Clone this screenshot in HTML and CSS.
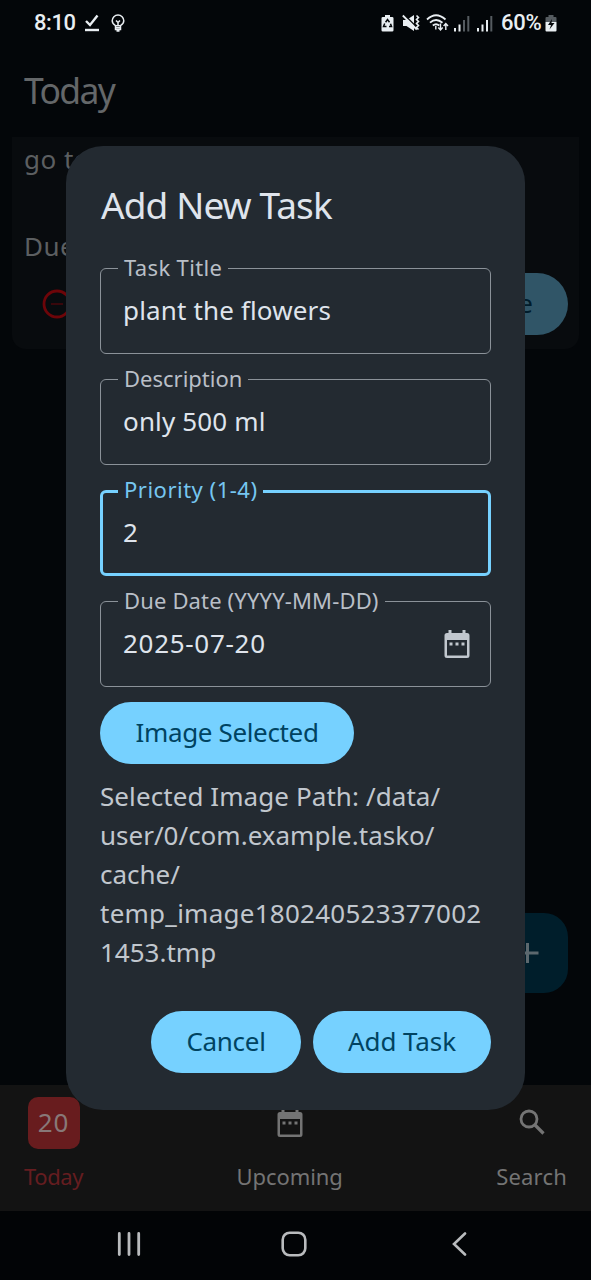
FILE: index.html
```html
<!DOCTYPE html>
<html lang="en">
<head>
<meta charset="utf-8">
<title>Tasko</title>
<link rel="stylesheet" href="styles.css">
</head>
<body>
<div class="screen">
  <header class="status">
    <div class="status-left">
      <span class="clock">8:10</span>
      <svg class="ico-done" width="16" height="18" viewBox="0 0 16 18"><path d="M2 7l4 4L13.500 1.500" fill="none" stroke="#e9eef2" stroke-width="2.400"/><path d="M1 16h14" stroke="#e9eef2" stroke-width="2.400"/></svg>
      <svg class="ico-bulb" width="14" height="18" viewBox="0 0 14 18" fill="none" stroke="#e9eef2" stroke-width="1.500"><path d="M4.500 11.700C2.500 10.500 1.200 9 1.200 6.800a5.600 5.600 0 0 1 11.600 0c0 2.200-1.300 3.700-3.300 4.900z"/><path d="M4.500 12v3.500h5V12M5.500 17h3M4.500 13.700h5M7 11V8.500L5 6.500M7 8.500l2-2"/></svg>
    </div>
    <div class="status-right">
      <svg width="13" height="18" viewBox="0 0 13 18"><path d="M4 1h5v2h2.200q1.300 0 1.300 1.300v12q0 1.200-1.300 1.200H1.800Q.5 17.500.5 16.300v-12Q.5 3 1.800 3H4z" fill="#e9eef2"/><path d="M4.600 8.200L6.500 5.500l2 2.700M9.500 9.800l1 2.700H8M5.500 12.500h-3l1.200-3" fill="none" stroke="#05080b" stroke-width="1.500"/></svg>
      <svg class="ico-mute" width="18" height="18" viewBox="0 0 18 18"><path d="M1 6h3.500L12 1v16l-7.500-5H1z" fill="#e9eef2"/><path d="M2 .5L15 13.500" stroke="#05080b" stroke-width="1.500"/><path d="M.800 1.500l14 14" stroke="#e9eef2" stroke-width="1.800"/><path d="M14.500 1.500l2 2-2 2 2 2-2 2 2 2-2 2 2 2" fill="none" stroke="#e9eef2" stroke-width="1.600"/></svg>
      <svg class="ico-wifi" width="23" height="19" viewBox="0 0 23 19" fill="none" stroke="#e9eef2" stroke-width="1.800"><path d="M1 6.500Q10 -2 19.500 6.500M4 9.700q6-5.500 12.500 0M6.800 12.500q3.200-2.600 6.500 0"/><path d="M9.800 13v3.500M14.500 10.500v6.500m-2.200-2.500l2.200 2.500 2.200-2.500M19.800 17v-6.500m-2.200 2.500l2.200-2.500 2.200 2.500" stroke-width="1.400"/></svg>
      <svg class="ico-sig" width="17" height="18" viewBox="0 0 17 18"><path d="M2 14v3.500M6.500 10.500v7" stroke="#e9eef2" stroke-width="2"/><path d="M11 6v11.500M15.300 2v15.500" stroke="#555b60" stroke-width="2"/></svg>
      <svg class="ico-sig2" width="17" height="18" viewBox="0 0 17 18"><path d="M2 14v3.500M6.500 10.500v7M11 6v11.500" stroke="#e9eef2" stroke-width="2"/><path d="M15.300 2v15.500" stroke="#555b60" stroke-width="2"/></svg>
      <span class="percent">60%</span>
      <svg class="ico-bat" width="12" height="18" viewBox="0 0 12 18"><path d="M3.500 1h5v2h2q1 0 1 1v4H.5V4q0-1 1-1h2z" fill="#555b60"/><path d="M.5 8h11v8.500q0 1-1 1h-9q-1 0-1-1z" fill="#e9eef2"/><path d="M7 5l-4 6h3l-1.500 4.500L9.500 9h-3z" fill="#05080b"/></svg>
    </div>
  </header>

  <main class="page">
    <h1 class="page-title">Today</h1>
    <section class="card">
      <p class="card-text">go to</p>
      <p class="card-text card-due">Due:</p>
      <div class="card-foot">
        <svg width="30" height="30" viewBox="0 0 30 30" fill="none" stroke="#6d0509" stroke-width="2.800"><circle cx="15" cy="15" r="13"/><path d="M9 15h12" stroke="#38070b" stroke-width="2"/></svg>
        <button class="pill dim">Delete</button>
      </div>
    </section>
    <button class="fab"><svg width="26" height="26" viewBox="0 0 26 26"><path d="M12.500 3v20M3 13h20.500" stroke="#5c686e" stroke-width="3"/></svg></button>
  </main>

  <nav class="tabs">
    <div class="tab tab-today"><span class="day">20</span><span class="tab-label l-today">Today</span></div>
    <div class="tab tab-up">
      <svg class="tab-icon" width="28" height="31" viewBox="0 0 28 31"><path d="M4 4h20q2.500 0 2.500 2.500v20q0 2.500-2.500 2.500H4q-2.500 0-2.500-2.500v-20Q1.500 4 4 4zM4 11v15.500h20V11z" fill="#747474" fill-rule="evenodd"/><path d="M7 1v4M21 1v4" stroke="#747474" stroke-width="3"/><path d="M6.500 15h3M12.500 15h3M18.500 15h3" stroke="#747474" stroke-width="3"/></svg>
      <span class="tab-label">Upcoming</span>
    </div>
    <div class="tab tab-search">
      <svg class="tab-icon" width="26" height="26" viewBox="0 0 26 26" fill="none" stroke="#747474" stroke-width="2.800"><circle cx="10" cy="10" r="8"/><path d="M15.500 15.500l9 9" stroke-width="3.200"/></svg>
      <span class="tab-label l-search">Search</span>
    </div>
  </nav>

  <footer class="sysnav">
    <svg width="24" height="24" viewBox="0 0 24 24" stroke="#b9bbbd" stroke-width="2.800" stroke-linecap="round"><path d="M2.300 1.500v21M12 1.500v21M21.700 1.500v21"/></svg>
    <svg class="home" width="26" height="26" viewBox="0 0 26 26" fill="none" stroke="#b9bbbd" stroke-width="2.600"><rect x="1.700" y="1.700" width="22.600" height="22.600" rx="7"/></svg>
    <svg width="15" height="24" viewBox="0 0 15 24" fill="none" stroke="#b9bbbd" stroke-width="2.600" stroke-linecap="round"><path d="M13 1.500L2 12l11 10.500"/></svg>
  </footer>

  <div class="dialog" role="dialog">
    <h2 class="dialog-title">Add New Task</h2>
    <div class="fields">
      <div class="field"><label class="f-title">Task Title</label><span class="value">plant the flowers</span></div>
      <div class="field"><label>Description</label><span class="value">only 500 ml</span></div>
      <div class="field focused"><label class="f-prio">Priority (1-4)</label><span class="value">2</span></div>
      <div class="field"><label class="f-date">Due Date (YYYY-MM-DD)</label><span class="value v-date">2025-07-20</span>
        <svg class="cal" width="28" height="31" viewBox="0 0 28 31"><path d="M4 4h20q2.500 0 2.500 2.500v20q0 2.500-2.500 2.500H4q-2.500 0-2.500-2.500v-20Q1.500 4 4 4zM4 11v15.500h20V11z" fill="#c1c7ce" fill-rule="evenodd"/><path d="M7 1v4M21 1v4" stroke="#c1c7ce" stroke-width="3"/><path d="M6.500 15h3M12.500 15h3M18.500 15h3" stroke="#c1c7ce" stroke-width="3"/></svg>
      </div>
    </div>
    <button class="pill image-btn">Image Selected</button>
    <p class="path"><span class="p1">Selected Image Path: /data/</span><br>user/0/com.example.tasko/<br>cache/<br><span class="p4">temp_image180240523377002</span><br>1453.tmp</p>
    <div class="actions">
      <button class="pill cancel">Cancel</button>
      <button class="pill add">Add Task</button>
    </div>
  </div>
</div>
</body>
</html>
```
FILE: styles.css
```css
* { box-sizing: border-box; margin: 0; padding: 0; }
body { background: #030609; font-family: "Noto Sans", "Open Sans", sans-serif; }
button { border: 0; font: inherit; }
svg { display: block; flex: none; }
.screen { position: relative; width: 591px; height: 1280px; display: flex; flex-direction: column; overflow: hidden; background: #030609; white-space: nowrap; }

.status { height: 45px; padding: 0 34px; display: flex; justify-content: space-between; align-items: center; color: #e9eef2; font: 500 22px/44px Roboto, sans-serif; }
.status-left, .status-right { display: flex; align-items: center; }
.clock { width: 42px; letter-spacing: -0.4px; }
.ico-done { margin-left: 8px; }
.ico-bulb { margin-left: 11px; }
.ico-mute { margin-left: 8px; }
.ico-wifi { margin-left: 6px; }
.ico-sig { margin-left: 4px; }
.ico-sig2 { margin-left: 6px; }
.percent { margin-left: 8px; width: 43px; letter-spacing: -0.3px; }
.ico-bat { margin-left: 1px; }

.page { flex: 1; display: flex; flex-direction: column; padding: 0 12px; }
.page-title { height: 92px; padding-left: 12px; font-size: 35.5px; line-height: 91px; font-weight: 400; color: #646769; letter-spacing: -1.7px; }
.card { height: 212px; padding: 1px 11px 14px 12px; border-radius: 0 0 14px 14px; background: #080b0e; display: flex; flex-direction: column; }
.card-text { height: 42px; line-height: 42px; font-size: 26px; letter-spacing: 0.5px; color: #5c5f61; }
.card-due { margin-top: 45px; }
.card-foot { flex: 1; display: flex; align-items: flex-end; justify-content: space-between; padding-left: 18px; }
.card-foot svg { margin-bottom: 16px; }
.pill { height: 62px; border-radius: 31px; background: #76d1ff; color: #004361; font-size: 26px; line-height: 60px; text-align: center; white-space: nowrap; padding-bottom: 2px; }
.dim { width: 146px; background: #305567; color: #001c2b; letter-spacing: -0.8px; }
.fab { align-self: flex-end; margin: 564px 11px 0 0; width: 80px; height: 80px; border-radius: 24px; background: #001e2b; display: flex; align-items: center; justify-content: center; }

.tabs { height: 126px; background: #131313; display: flex; justify-content: space-between; padding: 12px 24px 0; }
.tab { display: flex; flex-direction: column; align-items: center; color: #747474; }
.tab-label { font-size: 22px; line-height: 30px; margin-top: auto; margin-bottom: 20px; letter-spacing: -0.1px; }
.tab-today .tab-label { color: #651d20; letter-spacing: -0.4px; }
.tab .l-search { letter-spacing: 0.2px; }
.day { width: 52px; height: 52px; border-radius: 10px; background: #681c1e; color: #887878; font-size: 26px; line-height: 50px; text-align: center; letter-spacing: 1px; }
.tab-up .tab-icon { margin-top: 11px; }
.tab-search .tab-icon { margin-top: 12px; }

.sysnav { height: 69px; background: #020406; display: flex; align-items: center; justify-content: space-between; padding: 0 124px 3px 117px; }
.home { margin-right: 6px; }

.dialog { position: absolute; left: 66px; top: 146px; width: 459px; height: 964px; border-radius: 37px; background: #232a31; padding: 34px 34px 37px; display: flex; flex-direction: column; align-items: flex-start; color: #dfe4ec; }
.dialog-title { height: 50px; line-height: 50px; font-size: 37px; font-weight: 400; letter-spacing: -0.9px; padding-left: 1px; }
.fields { width: 391px; margin-top: 38px; display: flex; flex-direction: column; gap: 25px; }
.field { position: relative; height: 86px; border: 1.500px solid #8b9299; border-radius: 6px; display: flex; align-items: center; justify-content: space-between; padding: 0 19px 0 22px; }
.field label { position: absolute; left: 17px; top: -18px; padding: 0 6px; height: 32px; line-height: 32px; font-size: 22px; background: #232a31; color: #b9bfc7; }
.field .value { font-size: 26px; line-height: 40px; padding-bottom: 2px; letter-spacing: 0.150px; }
.field .v-date { letter-spacing: 0.700px; }
.field .f-title { letter-spacing: 0.350px; }
.field .f-date { letter-spacing: 0.150px; }
.focused { border: 3px solid #76d1ff; padding-left: 20px; }
.field.focused label { left: 15px; top: -20px; color: #76c6f0; letter-spacing: 0.500px; }
.cal { margin-right: 0.5px; }
.image-btn { width: 254px; margin-top: 15px; letter-spacing: -0.350px; }
.path { margin-top: 13px; font-size: 26px; line-height: 39px; color: #c1c7ce; }
.p1 { letter-spacing: 0.080px; }
.p4 { letter-spacing: 0.250px; }
.actions { align-self: stretch; display: flex; justify-content: flex-end; gap: 12px; margin-top: auto; }
.cancel { width: 150px; letter-spacing: -0.300px; }
.add { width: 178px; letter-spacing: -0.100px; }
```
